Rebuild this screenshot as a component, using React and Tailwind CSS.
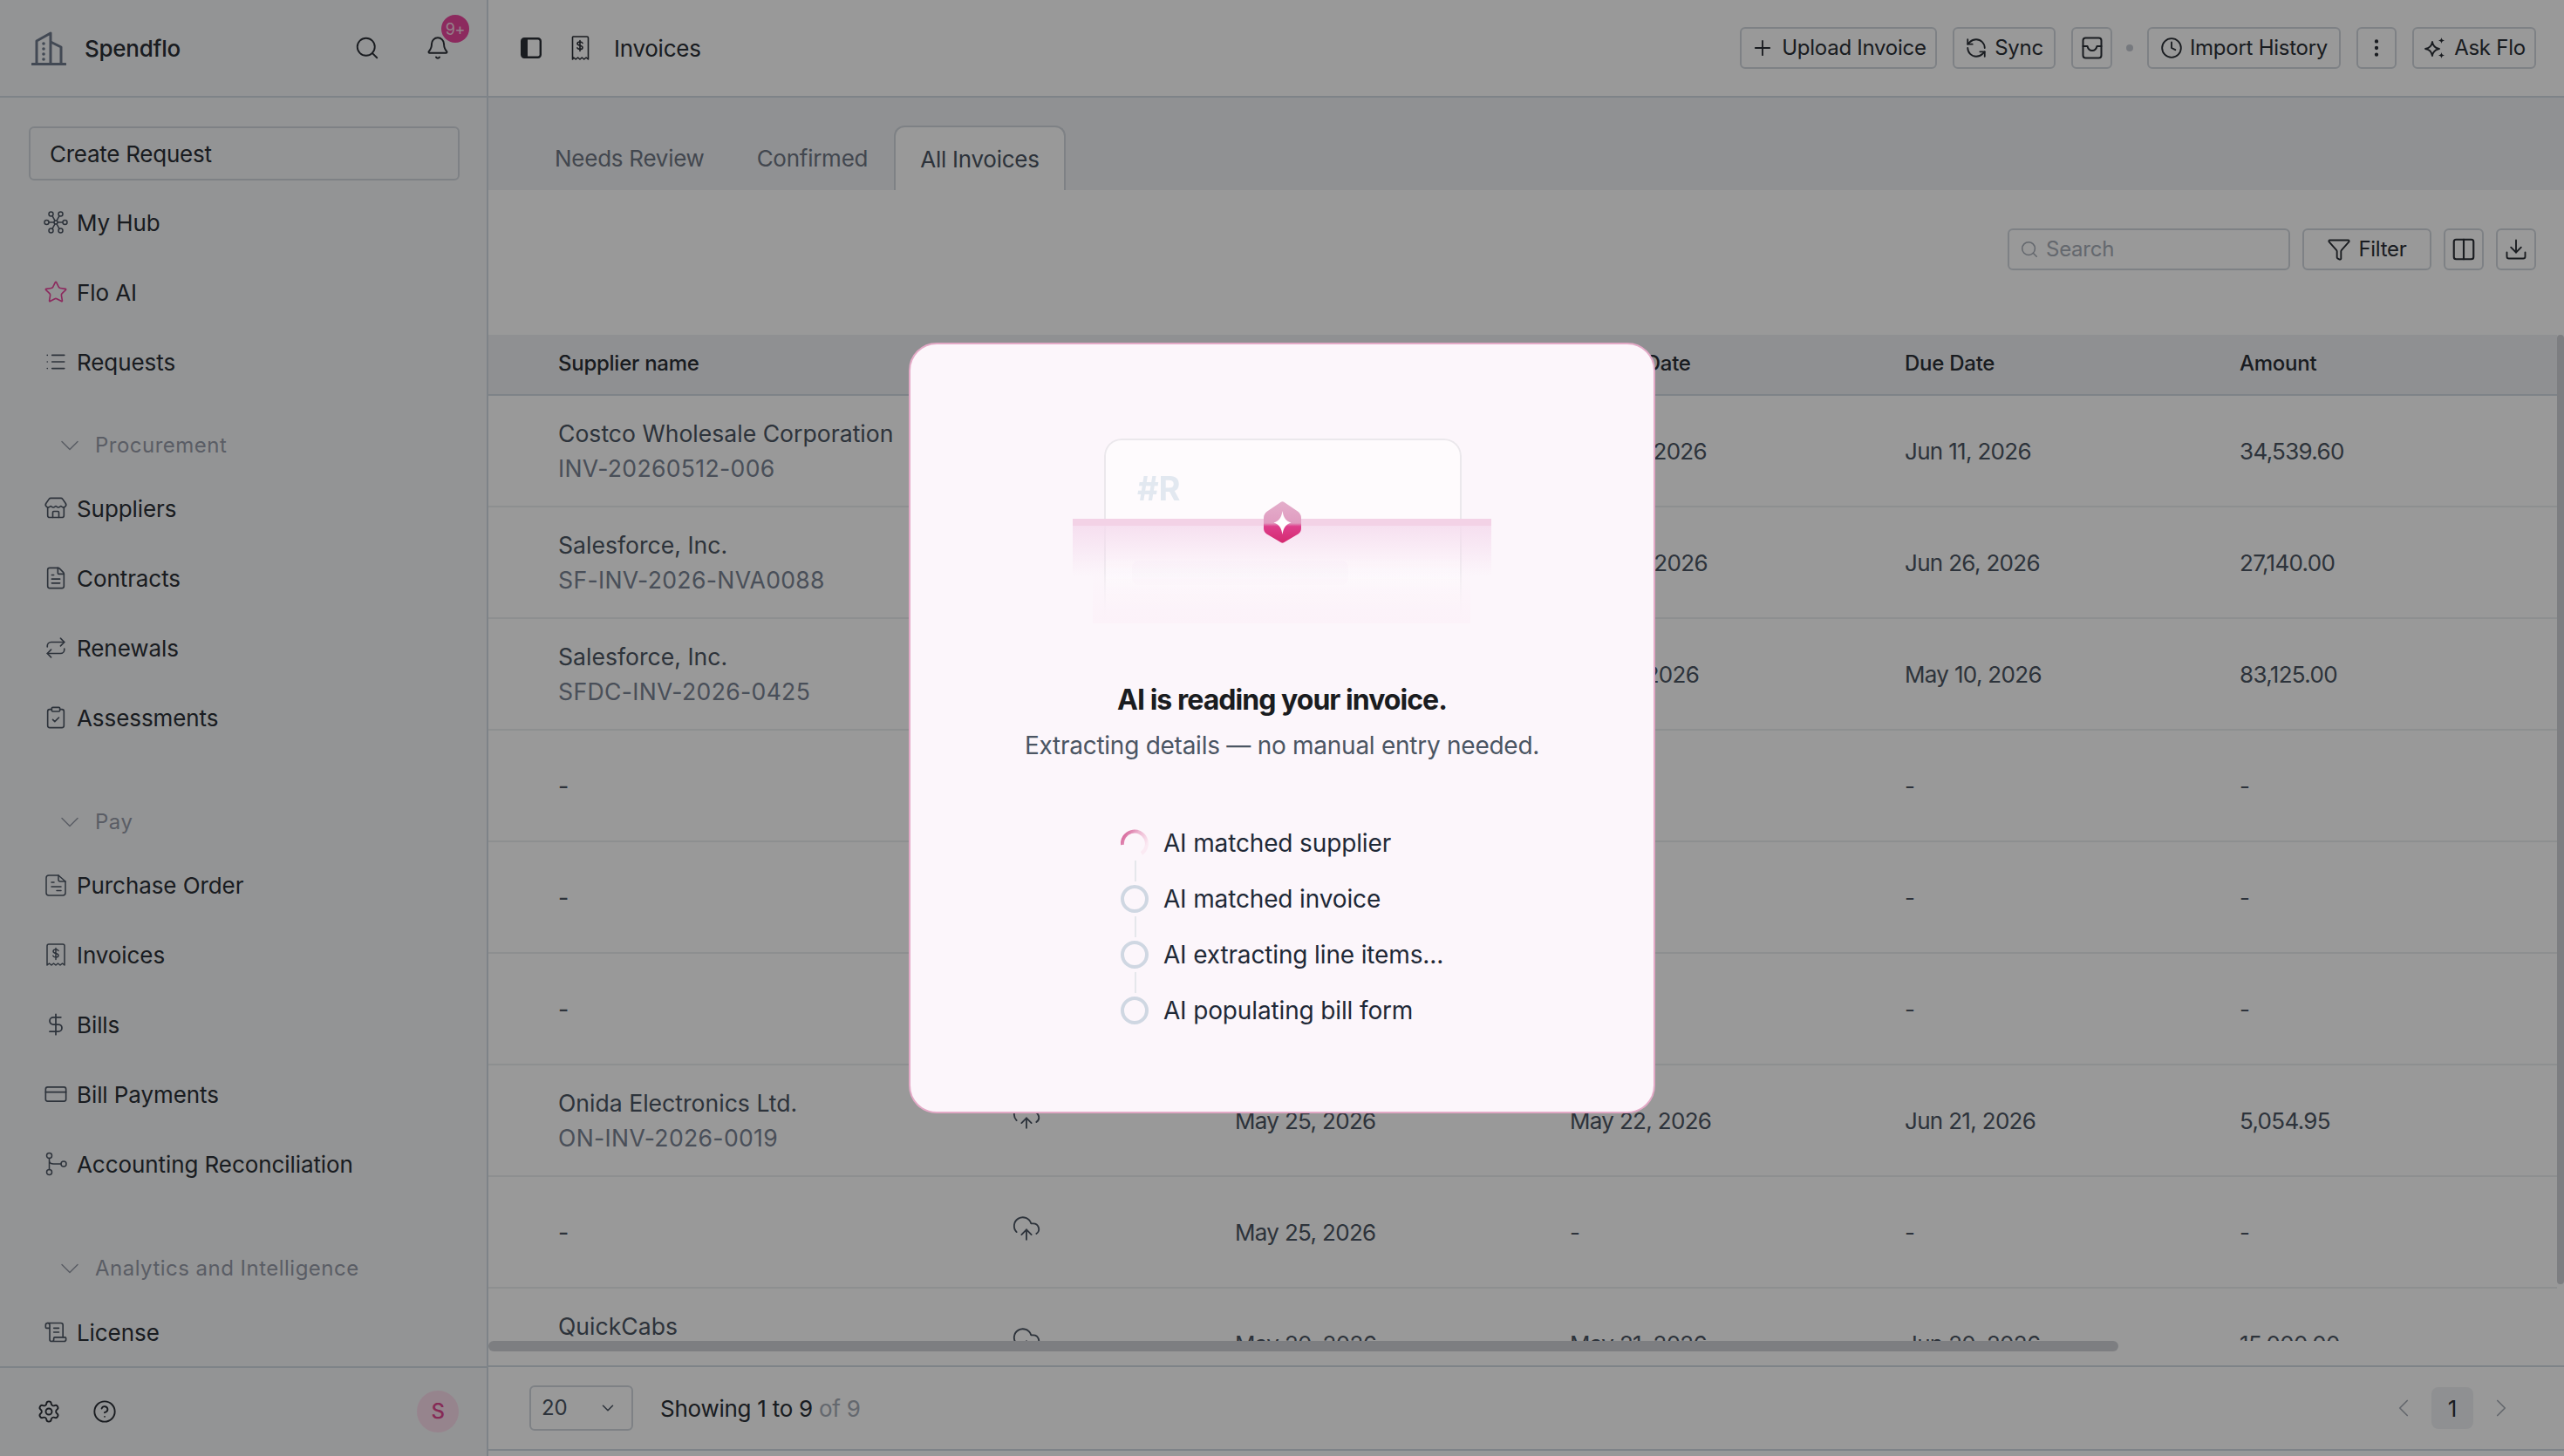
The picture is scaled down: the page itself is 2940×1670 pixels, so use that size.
import {
  Search, Bell, Star, List, Store, FileText, Repeat, ClipboardCheck, DollarSign, CreditCard, ScrollText,
  Settings, CircleHelp, ChevronDown, ChevronLeft, ChevronRight, Plus, RefreshCcw, Clock, EllipsisVertical,
  Funnel, Columns2, Download, CloudUpload,
} from 'lucide-react';

const Logo = () => (
  <svg width="40" height="40" viewBox="0 0 40 40" fill="none" stroke="#6f7a8c" strokeWidth="3" strokeLinejoin="round">
    <path d="M1 38.5h38" strokeLinecap="round" />
    <path d="M6 38V12L22 3v35" />
    <path d="M22 13l12 6v19" />
    <g fill="#6f7a8c" stroke="none">
      <circle cx="14" cy="15" r="1.8" />
      <circle cx="14" cy="21" r="1.8" />
      <circle cx="14" cy="27" r="1.8" />
      <circle cx="14" cy="33" r="1.8" />
    </g>
  </svg>
);

const HubIcon = ({ size = 28 }) => (
  <svg width={size} height={size} viewBox="0 0 28 28" fill="none" stroke="currentColor" strokeWidth="1.5">
    <circle cx="14" cy="14" r="2" />
    <circle cx="3.5" cy="14" r="2.5" />
    <circle cx="24.5" cy="14" r="2.5" />
    <circle cx="8.5" cy="4.5" r="2.5" />
    <circle cx="19.5" cy="4.5" r="2.5" />
    <circle cx="8.5" cy="23.5" r="2.5" />
    <circle cx="19.5" cy="23.5" r="2.5" />
    <path d="M6 14h6M16 14h6M10 6.7l3 5.5M18 6.7l-3 5.5M10 21.3l3-5.5M18 21.3l-3-5.5" />
  </svg>
);

const InvoiceIcon = () => (
  <svg width="28" height="28" viewBox="0 0 28 28" fill="none" stroke="currentColor" strokeWidth="1.5" strokeLinejoin="round" strokeLinecap="round">
    <path d="M6 2h16a2 2 0 0 1 2 2v22l-2.500-2-2.500 2-2.500-2-2.500 2-2.500-2-2.500 2-2.500-2L4 26V4a2 2 0 0 1 2-2z" />
    <path d="M17 9.500c-.5-1-1.500-1.500-3-1.500-1.800 0-3 .8-3 2.200 0 3 6 1.500 6 4.500 0 1.400-1.300 2.300-3 2.300-1.600 0-2.700-.6-3.200-1.700M14 6.500v13" />
  </svg>
);

const ReceiptTall = () => (
  <svg width="22" height="28" viewBox="0 0 22 28" fill="none" stroke="currentColor" strokeWidth="1.600" strokeLinejoin="round" strokeLinecap="round">
    <path d="M3 1h16a1.500 1.500 0 0 1 1.500 1.500V27l-2.400-2-2.400 2-2.400-2-2.300 2-2.400-2-2.400 2-2.400-2-1.300 2V2.500A1.500 1.500 0 0 1 3 1z" />
    <path d="M14 8.500c-.5-1-1.500-1.500-3-1.500-1.800 0-3 .8-3 2.100 0 2.900 6 1.400 6 4.300 0 1.300-1.300 2.100-3 2.100-1.600 0-2.600-.6-3.100-1.600M11 5.500v12" />
  </svg>
);

const PurchaseIcon = () => (
  <svg width="28" height="28" viewBox="0 0 28 28" fill="none" stroke="currentColor" strokeWidth="1.500" strokeLinejoin="round" strokeLinecap="round">
    <path d="M6 3h11l8 7v13a3 3 0 0 1-3 3H6a3 3 0 0 1-3-3V6a3 3 0 0 1 3-3z" />
    <path d="M17 3v5a2 2 0 0 0 2 2h6M9 11h3M9 16h11M15 20.500h5" />
  </svg>
);

const ReconcileIcon = () => (
  <svg width="28" height="28" viewBox="0 0 28 28" fill="none" stroke="currentColor" strokeWidth="1.500" strokeLinecap="round">
    <circle cx="6.500" cy="4.500" r="3" />
    <circle cx="6.500" cy="23.500" r="3" />
    <circle cx="23" cy="14" r="3" />
    <path d="M6.500 7.500v13M6.500 10c0 3 2 4 5 4h8.500" />
  </svg>
);

const PanelIcon = () => (
  <svg width="24" height="24" viewBox="0 0 24 24" fill="none">
    <rect x="1.200" y="1.200" width="21.600" height="21.600" rx="3" stroke="#2b2f36" strokeWidth="2.400" />
    <path d="M3 1.500h5v21H3a1.500 1.500 0 0 1-1.500-1.500V3A1.500 1.500 0 0 1 3 1.500z" fill="#2b2f36" />
  </svg>
);

const InboxIcon = () => (
  <svg width="24" height="26" viewBox="0 0 24 26" fill="none" stroke="currentColor" strokeWidth="2" strokeLinejoin="round" strokeLinecap="round">
    <rect x="1.500" y="1.500" width="21" height="23" rx="3" />
    <path d="M1.500 11h5c1 4 3 5 5.500 5s4.500-1 5.500-5h5" />
  </svg>
);

const AskFloIcon = () => (
  <svg width="28" height="28" viewBox="0 0 28 28" fill="none" stroke="currentColor" strokeWidth="1.800" strokeLinejoin="round">
    <path d="M11 7c.8 5 3 7.200 8 8-5 .8-7.200 3-8 8-.8-5-3-7.200-8-8 5-.8 7.200-3 8-8z" />
    <path d="M21.500 2c.4 2.200 1.300 3.100 3.500 3.500-2.200.4-3.100 1.300-3.500 3.500-.4-2.200-1.300-3.100-3.500-3.500 2.200-.4 3.100-1.300 3.500-3.500zM21.500 19c.4 2.200 1.300 3.100 3.500 3.500-2.200.4-3.100 1.300-3.500 3.500-.4-2.200-1.300-3.100-3.500-3.500 2.200-.4 3.100-1.300 3.500-3.500z" fill="currentColor" stroke="none" />
  </svg>
);

const Gem = () => (
  <svg width="43" height="48" viewBox="0 0 43 48">
    <defs>
      <linearGradient id="gem" x1="0" y1="0" x2="0" y2="1">
        <stop offset="0" stopColor="#e4aecb" />
        <stop offset="0.52" stopColor="#e09cc0" />
        <stop offset="0.6" stopColor="#de3f8c" />
        <stop offset="1" stopColor="#d42a70" />
      </linearGradient>
    </defs>
    <path d="M19.500 1 4 11.500Q0 14.500 0 19v12q0 4 3.500 6.500L19.500 47q2 1.300 4 0l16-9.500q3.500-2.500 3.500-6.500V19q0-4.500-4-7.500L23.500 1q-2-1.300-4 0z" fill="url(#gem)" />
    <path d="M21.500 11c1.200 8 4 11.500 10 13.500-6 2-8.800 5.500-10 13.500-1.200-8-4-11.500-10-13.500 6-2 8.800-5.500 10-13.500z" fill="#fff" />
  </svg>
);

const Spinner = () => (
  <svg width="32" height="32" viewBox="0 0 32 32" fill="none">
    <defs>
      <linearGradient id="spin" x1="0" y1="0" x2="1" y2="0.600">
        <stop offset="0" stopColor="#d2548f" />
        <stop offset="0.5" stopColor="#ecb4cf" />
        <stop offset="1" stopColor="#fbeaf3" />
      </linearGradient>
    </defs>
    <path d="M2 18A14 14 0 1 1 24 28" stroke="url(#spin)" strokeWidth="4" />
  </svg>
);

const SectionLabel = ({ label, className }) => (
  <div className={`flex h-12 items-center pl-[62px] text-[24px] tracking-[0.02em] text-[#969ca8] ${className}`}>
    <ChevronDown size={36} strokeWidth={1} className="mr-[11px]" />
    {label}
  </div>
);

const NavItem = ({ icon, label }) => (
  <div className="flex h-20 shrink-0 items-center pl-[50px] tracking-[-0.003em] text-[#2b2f36]">
    <span className="mr-[10px] flex w-7 justify-center text-[#4b5563]">{icon}</span>
    {label}
  </div>
);

const Btn = ({ children, className = '' }) => (
  <div className={`flex h-12 items-center justify-center rounded-[6px] border-2 border-[#d2d8de] text-[24px] text-[#2b2f36] ${className}`}>
    {children}
  </div>
);

const rows = [
  { name: 'Costco Wholesale Corporation', inv: 'INV-20260512-006', upload: 'May 25, 2026', date: 'May 12, 2026', due: 'Jun 11, 2026', amount: '34,539.60' },
  { name: 'Salesforce, Inc.', inv: 'SF-INV-2026-NVA0088', upload: 'May 25, 2026', date: 'May 27, 2026', due: 'Jun 26, 2026', amount: '27,140.00' },
  { name: 'Salesforce, Inc.', inv: 'SFDC-INV-2026-0425', upload: 'May 25, 2026', date: 'Apr 10, 2026', due: 'May 10, 2026', amount: '83,125.00' },
  { name: '-', upload: 'May 25, 2026', date: '-', due: '-', amount: '-' },
  { name: '-', upload: 'May 25, 2026', date: '-', due: '-', amount: '-' },
  { name: '-', upload: 'May 25, 2026', date: '-', due: '-', amount: '-' },
  { name: 'Onida Electronics Ltd.', inv: 'ON-INV-2026-0019', upload: 'May 25, 2026', date: 'May 22, 2026', due: 'Jun 21, 2026', amount: '5,054.95' },
  { name: '-', upload: 'May 25, 2026', date: '-', due: '-', amount: '-' },
  { name: 'QuickCabs', inv: 'QC-2026-0512', upload: 'May 20, 2026', date: 'May 21, 2026', due: 'Jun 20, 2026', amount: '15,000.00' },
];

const steps = ['AI matched supplier', 'AI matched invoice', 'AI extracting line items...', 'AI populating bill form'];

export default function App() {
  return (
    <div className="relative h-[1670px] w-[2940px] overflow-hidden bg-white font-[Inter,sans-serif] text-[26px] tracking-[-0.01em]">
      <div className="flex h-full">
        {/* Sidebar */}
        <aside className="flex w-[560px] shrink-0 flex-col border-r-2 border-[#d2dae3] bg-[#f6f7f9]">
          <div className="relative flex h-[112px] shrink-0 items-center border-b-2 border-[#d2dae3] pl-9 pr-6">
            <Logo />
            <span className="ml-[21px] font-medium text-[#2b2f36]">Spendflo</span>
            <Search size={30} strokeWidth={1.5} className="ml-auto mr-[52px] text-[#2b2f36]" />
            <Bell size={28} strokeWidth={1.7} className="mr-[18px] text-[#2b2f36]" />
            <span className="absolute left-[506px] top-[17px] flex size-8 items-center justify-center rounded-full bg-[#e9469d] text-[18px] text-[#f8d5e6]">9+</span>
          </div>
          <div className="flex min-h-0 flex-1 flex-col overflow-hidden">
            <div className="ml-[33px] mr-[31px] mt-[33px] flex h-[62px] shrink-0 items-center rounded-[6px] border-2 border-[#d2d8de] pl-[22px] text-[#2b2f36]">
              Create Request
            </div>
            <nav className="mt-2 flex flex-col">
              <NavItem icon={<HubIcon />} label="My Hub" />
              <NavItem icon={<Star size={28} strokeWidth={1.4} className="text-[#e9469d]" />} label="Flo AI" />
              <NavItem icon={<List size={26} strokeWidth={1.5} />} label="Requests" />
              <SectionLabel label="Procurement" className="mt-8" />
              <div className="mt-2 flex flex-col">
                <NavItem icon={<Store size={28} strokeWidth={1.4} />} label="Suppliers" />
                <NavItem icon={<FileText size={28} strokeWidth={1.4} />} label="Contracts" />
                <NavItem icon={<Repeat size={26} strokeWidth={1.5} />} label="Renewals" />
                <NavItem icon={<ClipboardCheck size={28} strokeWidth={1.4} />} label="Assessments" />
              </div>
              <SectionLabel label="Pay" className="mt-14" />
              <div className="mt-2 flex flex-col">
                <NavItem icon={<PurchaseIcon />} label="Purchase Order" />
                <NavItem icon={<InvoiceIcon />} label="Invoices" />
                <NavItem icon={<DollarSign size={28} strokeWidth={1.5} />} label="Bills" />
                <NavItem icon={<CreditCard size={28} strokeWidth={1.4} />} label="Bill Payments" />
                <NavItem icon={<ReconcileIcon />} label="Accounting Reconciliation" />
              </div>
              <SectionLabel label="Analytics and Intelligence" className="mt-14" />
              <div className="mt-[9px] flex flex-col">
                <NavItem icon={<ScrollText size={28} strokeWidth={1.4} />} label="License" />
              </div>
            </nav>
          </div>
          <div className="flex h-[103px] shrink-0 items-center border-t-2 border-[#d2dae3] pb-0.5 pl-[42px] pr-[32px] text-[#2b2f36]">
            <Settings size={28} strokeWidth={1.6} />
            <CircleHelp size={28} strokeWidth={1.6} className="ml-[36px]" />
            <span className="ml-auto flex size-12 items-center justify-center rounded-full bg-[#fbdcec] text-[24px] font-medium text-[#e0468f]">S</span>
          </div>
        </aside>

        {/* Main */}
        <main className="flex min-w-0 flex-1 flex-col">
          <header className="flex h-[112px] shrink-0 items-center border-b-2 border-[#d2dae3] pl-[37px] pr-[32px] text-[#2b2f36]">
            <PanelIcon />
            <span className="ml-[33px]"><ReceiptTall /></span>
            <span className="ml-[28px]">Invoices</span>
            <div className="ml-auto flex items-center gap-[18px]">
              <Btn className="w-[226px] gap-2"><Plus size={28} strokeWidth={1.6} />Upload Invoice</Btn>
              <Btn className="w-[118px] gap-2"><RefreshCcw size={26} strokeWidth={1.7} />Sync</Btn>
              <Btn className="w-[47px]"><InboxIcon /></Btn>
              <span className="-mx-[2px] size-2 rounded-full bg-[#c5cad3]" />
              <Btn className="w-[222px] gap-2"><Clock size={26} strokeWidth={1.7} />Import History</Btn>
              <Btn className="w-[46px]"><EllipsisVertical size={26} strokeWidth={2} /></Btn>
              <Btn className="w-[142px] gap-2"><AskFloIcon />Ask Flo</Btn>
            </div>
          </header>

          <div className="flex h-[106px] shrink-0 items-end bg-[#f1f2f5] pl-[64px] text-[#6f7784]">
            <span className="flex h-[74px] items-center px-3">Needs Review</span>
            <span className="ml-9 flex h-[74px] items-center px-3">Confirmed</span>
            <span className="ml-[18px] flex h-[74px] items-center rounded-t-[12px] border-2 border-b-0 border-[#d2d8de] bg-white px-7 text-[#4b5563]">All Invoices</span>
          </div>

          <div className="flex h-[166px] shrink-0 items-start justify-end gap-[14px] pr-[32px] pt-[44px]">
            <div className="flex h-12 w-[324px] items-center rounded-[6px] border-2 border-[#d2d8de] pl-3 text-[24px] text-[#a7adb7]">
              <Search size={22} strokeWidth={1.7} className="mr-2" />
              Search
            </div>
            <Btn className="w-[148px] gap-2"><Funnel size={28} strokeWidth={1.6} />Filter</Btn>
            <Btn className="w-[46px]"><Columns2 size={30} strokeWidth={1.7} /></Btn>
            <Btn className="w-[46px]"><Download size={28} strokeWidth={1.6} /></Btn>
          </div>

          <div className="flex min-h-0 flex-1">
            <div className="flex min-w-0 flex-1 flex-col">
              <div className="min-h-0 flex-1 overflow-hidden">
                <div className="grid h-[70px] grid-cols-[602px_254px_384px_384px_384px_1fr] items-center border-b-2 border-[#d2dae3] bg-[#eff1f3] pb-0.5 text-[24px] font-medium text-[#2b2f36]">
                  <span className="pl-20">Supplier name</span>
                  <span>Source</span>
                  <span>Upload Date</span>
                  <span>Invoice Date</span>
                  <span>Due Date</span>
                  <span>Amount</span>
                </div>
                {rows.map((row, i) => (
                  <div key={i} className="grid h-32 grid-cols-[602px_254px_384px_384px_384px_1fr] items-center border-b-2 border-[#eceef1] tracking-[-0.026em] text-[#4b5563]">
                    <div className="flex flex-col pl-20 text-[26.6px] leading-10 tracking-normal">
                      <span>{row.name}</span>
                      {row.inv && <span className="tracking-[0.012em] text-[#7b8494]">{row.inv}</span>}
                    </div>
                    <CloudUpload size={34} strokeWidth={1.3} className="-ml-0.5 -mt-2" />
                    <span>{row.upload}</span>
                    <span>{row.date}</span>
                    <span>{row.due}</span>
                    <span>{row.amount}</span>
                  </div>
                ))}
              </div>
              <div className="h-7 shrink-0">
                <div className="h-3 w-[1869px] rounded-full bg-[#d0d3d8]" />
              </div>
            </div>
            <div className="w-2 shrink-0">
              <div className="h-[1089px] rounded-full bg-[#d0d3d8]" />
            </div>
          </div>

          <footer className="mb-1.5 flex h-[98px] shrink-0 items-center border-y-2 border-[#d2dae3] pl-[47px] pr-[55px]">
            <div className="flex h-[52px] w-[119px] items-center justify-between rounded-[6px] border-2 border-[#d2d8de] pl-3 pr-4 text-[24px] text-[#4b5563]">
              20
              <ChevronDown size={22} strokeWidth={1.7} />
            </div>
            <span className="ml-[31px] text-[#2b2f36]">Showing 1 to 9 <span className="text-[#a7adb7]">of 9</span></span>
            <div className="ml-auto flex items-center gap-[15px] text-[#a7adb7]">
              <ChevronLeft size={34} strokeWidth={1.2} />
              <span className="flex h-12 w-12 items-center justify-center rounded-[8px] bg-[#eff1f3] text-[#2b2f36]">1</span>
              <ChevronRight size={34} strokeWidth={1.2} />
            </div>
          </footer>
        </main>
      </div>

      {/* Processing overlay */}
      <div className="absolute inset-0 flex items-center justify-center bg-black/40">
        <div className="h-[884px] w-[856px] overflow-hidden rounded-[32px] border-2 border-[#e3a9c6] bg-[#fcf6fb] pt-[108px]">
          <div className="relative mx-auto h-[222px] w-[480px]">
            <div className="absolute left-[36px] top-0 h-[212px] w-[410px] rounded-t-[20px] border-2 border-[#ebe8ec] bg-[#fefbfd] [mask-image:linear-gradient(to_bottom,black_60%,transparent)]">
              <p className="ml-[36px] mt-[31px] text-[38px] font-bold leading-[48px] text-[#e2e8f0]">#R</p>
              <div className="ml-[30px] mt-[59px] h-7 w-[248px] rounded-[8px] bg-[#fbf7fb]" />
            </div>
            <div className="absolute left-[23px] top-[150px] h-[62px] w-[433px] bg-gradient-to-b from-transparent to-[#fcf2f9]" />
            <div className="absolute left-0 top-[92px] h-[66px] w-full bg-gradient-to-b from-[#f5dcee] to-transparent" />
            <div className="absolute left-0 top-[92px] h-2 w-full bg-[#f3d2e6]" />
            <div className="absolute left-[219px] top-[72px]"><Gem /></div>
          </div>

          <h2 className="mt-[58px] text-center text-[32px] font-bold leading-10 tracking-[-0.03em] text-[#1a1c20]">AI is reading your invoice.</h2>
          <p className="mt-3 text-center text-[28px] leading-10 text-[#4b5563]">Extracting details — no manual entry needed.</p>

          <div className="mx-auto mt-[76px] flex w-fit flex-col gap-8 text-[28px] tracking-[-0.005em] text-[#1f2937]">
            {steps.map((step, i) => (
              <div key={step} className="relative flex h-8 items-center gap-[17px]">
                {i === 0 ? <Spinner /> : <span className="size-8 rounded-full border-4 border-[#cfd7e2]" />}
                {i < steps.length - 1 && <span className="absolute left-[16px] top-[36px] h-6 w-0.5 bg-[#e5e7eb]" />}
                {step}
              </div>
            ))}
          </div>
        </div>
      </div>
    </div>
  );
}
